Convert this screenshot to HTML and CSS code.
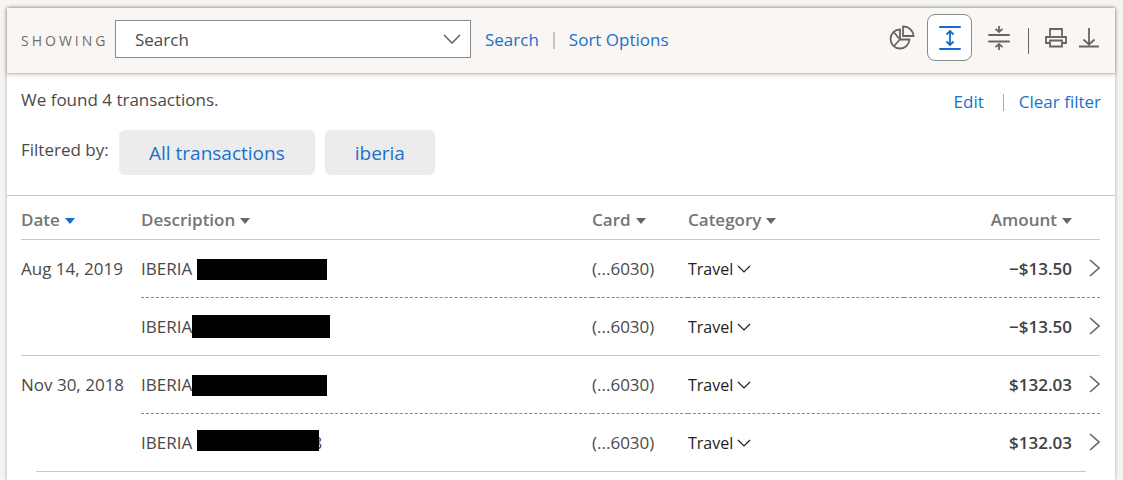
FILE: index.html
```html
<!DOCTYPE html>
<html lang="en">
<head>
    <meta charset="UTF-8">
    <meta name="viewport" content="width=device-width, initial-scale=1.0">
    <title>Transactions</title>
    <link rel="stylesheet" href="styles.css">
</head>
<body>
    <main class="card">
        <div class="toolbar">
            <label class="showing" for="showing">SHOWING</label>
            <div class="select-box">
                <select id="showing">
                    <option>Search</option>
                </select>
                <svg width="18" height="10" viewBox="0 0 18 10"><path d="M1 1l8 8 8-8"/></svg>
            </div>
            <nav class="links">
                <a href="#">Search</a>
                <span class="divider"></span>
                <a href="#">Sort Options</a>
            </nav>
            <div class="icons">
                <button type="button" class="icon-btn" aria-label="Spending chart">
                    <svg width="26" height="26" viewBox="0 0 26 26">
                        <path d="M11 4.500A9.500 9.500 0 1 0 20.500 14.500H11zM11 14.500L5 21M11 14.500L5 7.500"/>
                        <path d="M14 1.500V11H24.500A10 10 0 0 0 14 1.500z"/>
                    </svg>
                </button>
                <button type="button" class="icon-btn active" aria-label="Expanded view" aria-pressed="true">
                    <svg width="24" height="26" viewBox="0 0 24 26">
                        <path class="thick" d="M2 2H22M2 24H22"/>
                        <path d="M12 6V20M8.500 9.500L12 6l3.500 3.500M8.500 16.500L12 20l3.500-3.500"/>
                    </svg>
                </button>
                <button type="button" class="icon-btn" aria-label="Condensed view">
                    <svg width="24" height="26" viewBox="0 0 24 26">
                        <path class="thick" d="M2 10H22M2 16.500H22"/>
                        <path d="M12 1V7M8.500 3.800L12 7l3.500-3.200M12 25V19M8.500 22.200L12 19l3.500 3.200"/>
                    </svg>
                </button>
                <span class="bar"></span>
                <button type="button" class="icon-btn small" aria-label="Print">
                    <svg width="22" height="20" viewBox="0 0 22 20">
                        <path d="M5 9V1H17V9M5 15H1V9H21V15H17M5 12.500H17V18.500H5z"/>
                    </svg>
                </button>
                <button type="button" class="icon-btn small" aria-label="Download">
                    <svg width="22" height="20" viewBox="0 0 22 20">
                        <path d="M11 0V16M5.500 11.500L11 16.500l5.500-5M1 18.500H21"/>
                    </svg>
                </button>
            </div>
        </div>

        <section class="results">
            <div class="summary">
                <p class="found">We found 4 transactions.</p>
                <div class="filters">
                    <span>Filtered by:</span>
                    <button type="button" class="chip">All transactions</button>
                    <button type="button" class="chip">iberia</button>
                </div>
            </div>
            <nav class="links">
                <a href="#">Edit</a>
                <span class="divider"></span>
                <a href="#">Clear filter</a>
            </nav>
        </section>

        <div class="table-wrap">
            <table class="transactions">
                <thead>
                    <tr>
                        <th class="date sorted"><button type="button">Date</button></th>
                        <th><button type="button">Description</button></th>
                        <th class="number"><button type="button">Card</button></th>
                        <th class="category"><button type="button">Category</button></th>
                        <th class="amount"><button type="button">Amount</button></th>
                        <th class="more"></th>
                    </tr>
                </thead>
                <tbody>
                    <tr class="inner">
                        <td class="date">Aug 14, 2019</td>
                        <td>IBERIA <span class="redacted size-1"></span></td>
                        <td>(...6030)</td>
                        <td><div class="picker"><select aria-label="Category"><option>Travel</option></select><svg width="14" height="8" viewBox="0 0 14 8"><path d="M1 1l6 6 6-6"/></svg></div></td>
                        <td class="amount">−$13.50</td>
                        <td class="more"><button type="button" aria-label="Details"><svg width="11" height="18" viewBox="0 0 11 18"><path d="M1 1l9 8-9 8"/></svg></button></td>
                    </tr>
                    <tr>
                        <td class="date"></td>
                        <td>IBERIA<span class="redacted size-2"></span></td>
                        <td>(...6030)</td>
                        <td><div class="picker"><select aria-label="Category"><option>Travel</option></select><svg width="14" height="8" viewBox="0 0 14 8"><path d="M1 1l6 6 6-6"/></svg></div></td>
                        <td class="amount">−$13.50</td>
                        <td class="more"><button type="button" aria-label="Details"><svg width="11" height="18" viewBox="0 0 11 18"><path d="M1 1l9 8-9 8"/></svg></button></td>
                    </tr>
                    <tr class="inner">
                        <td class="date">Nov 30, 2018</td>
                        <td>IBERIA<span class="redacted size-3"></span></td>
                        <td>(...6030)</td>
                        <td><div class="picker"><select aria-label="Category"><option>Travel</option></select><svg width="14" height="8" viewBox="0 0 14 8"><path d="M1 1l6 6 6-6"/></svg></div></td>
                        <td class="amount">$132.03</td>
                        <td class="more"><button type="button" aria-label="Details"><svg width="11" height="18" viewBox="0 0 11 18"><path d="M1 1l9 8-9 8"/></svg></button></td>
                    </tr>
                    <tr class="last">
                        <td class="date"></td>
                        <td>IBERIA <span class="redacted size-4"></span><span class="tail">8</span></td>
                        <td>(...6030)</td>
                        <td><div class="picker"><select aria-label="Category"><option>Travel</option></select><svg width="14" height="8" viewBox="0 0 14 8"><path d="M1 1l6 6 6-6"/></svg></div></td>
                        <td class="amount">$132.03</td>
                        <td class="more"><button type="button" aria-label="Details"><svg width="11" height="18" viewBox="0 0 11 18"><path d="M1 1l9 8-9 8"/></svg></button></td>
                    </tr>
                </tbody>
            </table>
            <hr>
        </div>
    </main>
</body>
</html>
```
FILE: styles.css
```css
* {
    box-sizing: border-box;
}

body {
    margin: 0;
    padding: 8px 8px 0 7px;
    background-color: #f6f5f1;
    color: #4a4a4c;
    font-family: "Open Sans", "Noto Sans", sans-serif;
    font-size: 17px;
    line-height: 24px;
}

a {
    color: #1a70cc;
    text-decoration: none;
}

button, select {
    margin: 0;
    padding: 0;
    border: none;
    background: none;
    color: inherit;
    font: inherit;
    cursor: pointer;
}

select {
    appearance: none;
}

svg {
    display: block;
    fill: none;
    stroke: #666;
    stroke-width: 1.6;
}

.card {
    min-height: calc(100vh - 8px);
    background: #fff;
    box-shadow: 0 0 4px rgba(0, 0, 0, 0.3);
}

.toolbar {
    display: flex;
    align-items: center;
    height: 66px;
    padding: 0 10px 3px 14px;
    background: #faf6f3;
    border-bottom: 1px solid #c8c8c8;
    box-shadow: 0 0 4px rgba(0, 0, 0, 0.3);
}

.showing {
    width: 94px;
    padding-top: 4px;
    color: #6e6e6e;
    font-size: 14px;
    letter-spacing: 3px;
}

.select-box {
    display: grid;
    align-items: center;
    width: 356px;
    height: 38px;
    background: #fff;
    border: 1px solid #888b8d;
}

.select-box select,
.select-box svg {
    grid-area: 1 / 1;
}

.select-box select {
    height: 100%;
    padding: 2px 40px 0 19px;
}

.select-box svg {
    justify-self: end;
    margin-right: 9px;
    pointer-events: none;
}

.links {
    display: flex;
    align-items: center;
}

.toolbar .links {
    margin-left: 14px;
    padding-top: 2px;
}

.divider {
    width: 2px;
    height: 17px;
    margin: 0 14px;
    background: #c4c4c4;
}

.icons {
    display: flex;
    align-items: center;
    margin: 0 0 3px auto;
}

.icon-btn {
    display: flex;
    align-items: center;
    justify-content: center;
    width: 50px;
    height: 47px;
}

.icon-btn svg {
    stroke-width: 1.8;
}

.icon-btn.active {
    width: 45px;
    margin-right: 2px;
    background: #fff;
    border: 1px solid #888b8d;
    border-radius: 8px;
}

.icon-btn.active svg {
    stroke: #166bcb;
}

.icon-btn.small {
    width: 33px;
}

.icon-btn .thick {
    stroke-width: 2;
    stroke-linecap: round;
}

.bar {
    width: 1px;
    height: 26px;
    margin: 6px 10px 0 4px;
    background: #666;
}

.results {
    display: flex;
    justify-content: space-between;
    align-items: flex-start;
    padding: 14px 14px 20px;
    border-bottom: 1px solid #c8c8c8;
}

.results .links {
    margin-top: 2px;
}

.results .divider {
    margin: 0 15px 0 19px;
    width: 1px;
    background: #aaa;
}

.found {
    margin: 0;
}

.filters {
    display: flex;
    align-items: center;
    gap: 10px;
    margin-top: 18px;
}

.filters span {
    width: 88px;
    padding-bottom: 5px;
}

.chip {
    height: 45px;
    padding: 0 30px;
    background: #ececec;
    border-radius: 6px;
    color: #1a70cc;
    font-size: 19px;
}

.table-wrap {
    padding: 0 15px 0 14px;
}

.transactions {
    width: 100%;
    table-layout: fixed;
    border-collapse: separate;
    border-spacing: 0;
}

.transactions th,
.transactions td {
    padding: 0;
    text-align: left;
    white-space: nowrap;
}

.transactions th {
    height: 44px;
    padding-top: 4px;
    border-bottom: 1px solid #c8c8c8;
    color: #757575;
    font-weight: 600;
}

.transactions td {
    height: 58px;
    border-bottom: 1px solid #c8c8c8;
}

.transactions .inner td {
    border-bottom: 1px dashed #888;
}

.transactions .inner td.date,
.transactions .last td {
    border-bottom-color: transparent;
}

th button::after {
    content: "";
    display: inline-block;
    margin-left: 5px;
    border: 5px solid transparent;
    border-top: 6px solid #666;
    border-bottom: none;
    vertical-align: 2px;
}

.sorted button::after {
    border-top-color: #166bcb;
}

th.date {
    width: 120px;
}

th.number {
    width: 96px;
}

th.category {
    width: 216px;
}

th.amount {
    width: 168px;
}

th.more {
    width: 28px;
}

.transactions .amount {
    text-align: right;
}

td.amount {
    color: #414042;
    font-weight: 600;
}

td.more button {
    display: block;
    margin: 0 0 2px auto;
}

.picker {
    display: flex;
    align-items: center;
    gap: 3px;
    color: #222;
}

.picker select {
    font-size: 16px;
}

.picker svg {
    stroke: #222;
    stroke-width: 1.2;
}

.redacted {
    display: inline-block;
    position: relative;
    height: 21px;
    background: #000;
    vertical-align: -5px;
}

.size-1 {
    width: 130px;
}

.size-2 {
    width: 138px;
    height: 23px;
}

.size-3 {
    width: 135px;
}

.size-4 {
    width: 122px;
    vertical-align: -2px;
}

.tail {
    margin-left: -6px;
}

hr {
    height: 1px;
    margin: -1px 14px 0 15px;
    border: none;
    background: #c8c8c8;
}
```
